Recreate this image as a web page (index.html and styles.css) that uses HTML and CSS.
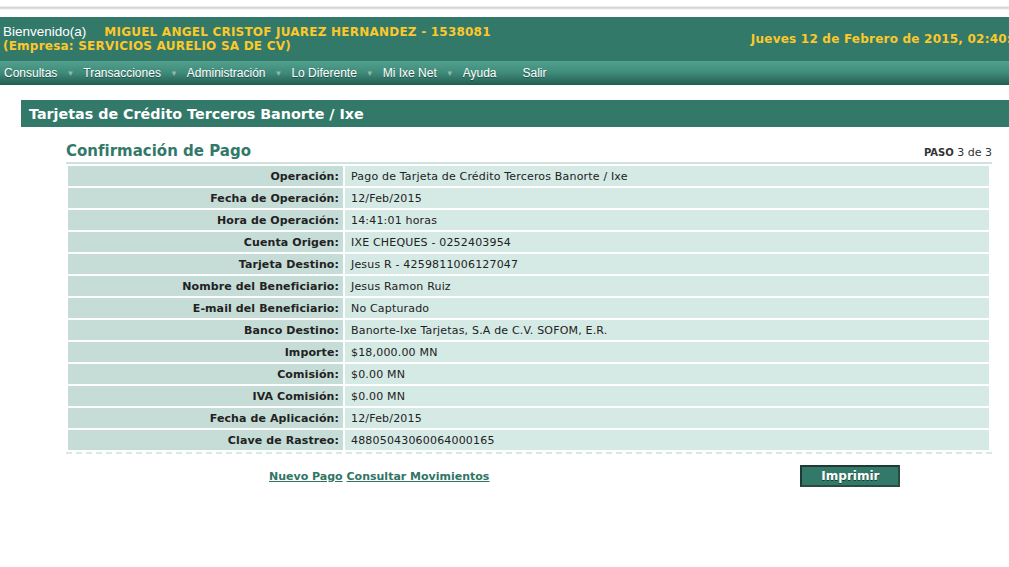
FILE: index.html
```html
<!DOCTYPE html>
<html lang="es">
<head>
<meta charset="utf-8">
<title>Confirmación de Pago</title>
<link rel="stylesheet" href="styles.css">
</head>
<body>
<div class="topstrip"></div>
<header class="header">
  <div class="welcome">
    <div class="line1"><span class="hello">Bienvenido(a)</span><span class="user">MIGUEL ANGEL CRISTOF JUAREZ HERNANDEZ - 1538081</span></div>
    <div class="line2">(Empresa: SERVICIOS AURELIO SA DE CV)</div>
  </div>
  <div class="date">Jueves 12 de Febrero de 2015, 02:40:26</div>
</header>
<nav class="menu">
  <span class="item">Consultas<span class="arr">▼</span></span>
  <span class="item">Transacciones<span class="arr">▼</span></span>
  <span class="item">Administración<span class="arr">▼</span></span>
  <span class="item">Lo Diferente<span class="arr">▼</span></span>
  <span class="item">Mi Ixe Net<span class="arr">▼</span></span>
  <span class="item">Ayuda</span>
  <span class="item salir">Salir</span>
</nav>
<main class="content">
  <h1 class="titlebar">Tarjetas de Crédito Terceros Banorte / Ixe</h1>
  <section class="panel">
    <div class="panel-head">
      <h2 class="subtitle">Confirmación de Pago</h2>
      <div class="step"><b>PASO</b> 3 de 3</div>
    </div>
    <table class="data">
      <tr><th>Operación:</th><td>Pago de Tarjeta de Crédito Terceros Banorte / Ixe</td></tr>
      <tr><th>Fecha de Operación:</th><td>12/Feb/2015</td></tr>
      <tr><th>Hora de Operación:</th><td>14:41:01 horas</td></tr>
      <tr><th>Cuenta Origen:</th><td>IXE CHEQUES - 0252403954</td></tr>
      <tr><th>Tarjeta Destino:</th><td>Jesus R - 4259811006127047</td></tr>
      <tr><th>Nombre del Beneficiario:</th><td>Jesus Ramon Ruiz</td></tr>
      <tr><th>E-mail del Beneficiario:</th><td>No Capturado</td></tr>
      <tr><th>Banco Destino:</th><td>Banorte-Ixe Tarjetas, S.A de C.V. SOFOM, E.R.</td></tr>
      <tr><th>Importe:</th><td>$18,000.00 MN</td></tr>
      <tr><th>Comisión:</th><td>$0.00 MN</td></tr>
      <tr><th>IVA Comisión:</th><td>$0.00 MN</td></tr>
      <tr><th>Fecha de Aplicación:</th><td>12/Feb/2015</td></tr>
      <tr><th>Clave de Rastreo:</th><td>48805043060064000165</td></tr>
    </table>
    <div class="actions">
      <div class="links"><a href="#">Nuevo Pago</a> <a href="#">Consultar Movimientos</a></div>
      <button class="btn" type="button">Imprimir</button>
    </div>
  </section>
</main>
</body>
</html>
```
FILE: styles.css
```css
html, body { margin: 0; padding: 0; background: #fff; }
body { font-family: "DejaVu Sans", Verdana, sans-serif; color: #222; }

.topstrip {
  height: 17px;
  background: linear-gradient(#fff 0, #fff 6px, #dcdcdc 7px, #cfcfcf 8px, #ececec 9px, #fff 10px, #fff 17px);
}

.header {
  background: #33796a;
  height: 44px;
  display: flex;
  justify-content: space-between;
  align-items: flex-start;
  overflow: hidden;
  white-space: nowrap;
}
.welcome { padding: 6px 0 0 3px; }
.line1 { height: 15px; line-height: 15px; }
.hello { font-family: "Liberation Sans", Arial, sans-serif; color: #fff; font-size: 13.5px; margin-right: 18px; }
.user, .line2, .date { color: #fcc82a; font-weight: bold; font-size: 12px; letter-spacing: 0.22px; }
.line2 { line-height: 15px; padding-top: 1px; }
.date { padding-top: 15px; margin-right: -20px; }

.menu {
  height: 24px;
  background: linear-gradient(#52a08e, #3f8a79 50%, #235d50);
  display: flex;
  align-items: center;
  padding-left: 4px;
  font-family: "Liberation Sans", Arial, sans-serif;
  font-size: 12px;
  color: #fff;
  text-shadow: 0 1px 0 rgba(0,0,0,0.35);
}
.item { margin-right: 9px; }
.arr { font-size: 8px; color: #8fb8ad; margin-left: 9px; text-shadow: none; vertical-align: 1px; }
.salir { margin-left: 17px; }

.content { padding: 15px 0 0 21px; }
.titlebar {
  margin: 0;
  height: 27px;
  background: #33796a;
  color: #fff;
  font-size: 14.3px;
  line-height: 28px;
  padding-left: 8px;
}
.panel { width: 926px; margin: 15px 0 0 45px; }
.panel-head { display: flex; justify-content: space-between; align-items: flex-end; border-bottom: 2px solid #cfe2dd; padding-bottom: 1px; }
.subtitle { margin: 0; color: #33796a; font-size: 15px; line-height: 19px; }
.step { font-size: 11px; color: #333; padding-bottom: 2px; }
.step b { font-size: 10px; }

.data { width: 925px; border-collapse: separate; border-spacing: 2px; font-size: 11px; letter-spacing: 0.18px; margin-top: 0; }
.data th, .data td { height: 20px; padding: 0 0 0 6px; }
.data th { width: 265px; background: #c5dcd7; text-align: right; padding: 0 4px 0 6px; color: #222; font-weight: bold; letter-spacing: 0.1px; }
.data td { background: #d5e9e5; text-align: left; }

.actions {
  border-top: 2px dashed #d7ebe6;
  display: flex;
  align-items: center;
  padding-top: 11px;
}
.links { font-size: 11px; font-weight: bold; margin-left: 203px; }
.links a { color: #2f7566; }
.btn {
  margin-left: 311px;
  width: 100px;
  height: 22px;
  background: #33796a;
  color: #fff;
  font-family: "DejaVu Sans", Verdana, sans-serif;
  font-size: 12px;
  font-weight: bold;
  border: 2px solid;
  border-color: #1e3a33 #2a4a42 #2a4a42 #1e3a33;
  text-shadow: 0 1px 0 #163d34;
}
```
